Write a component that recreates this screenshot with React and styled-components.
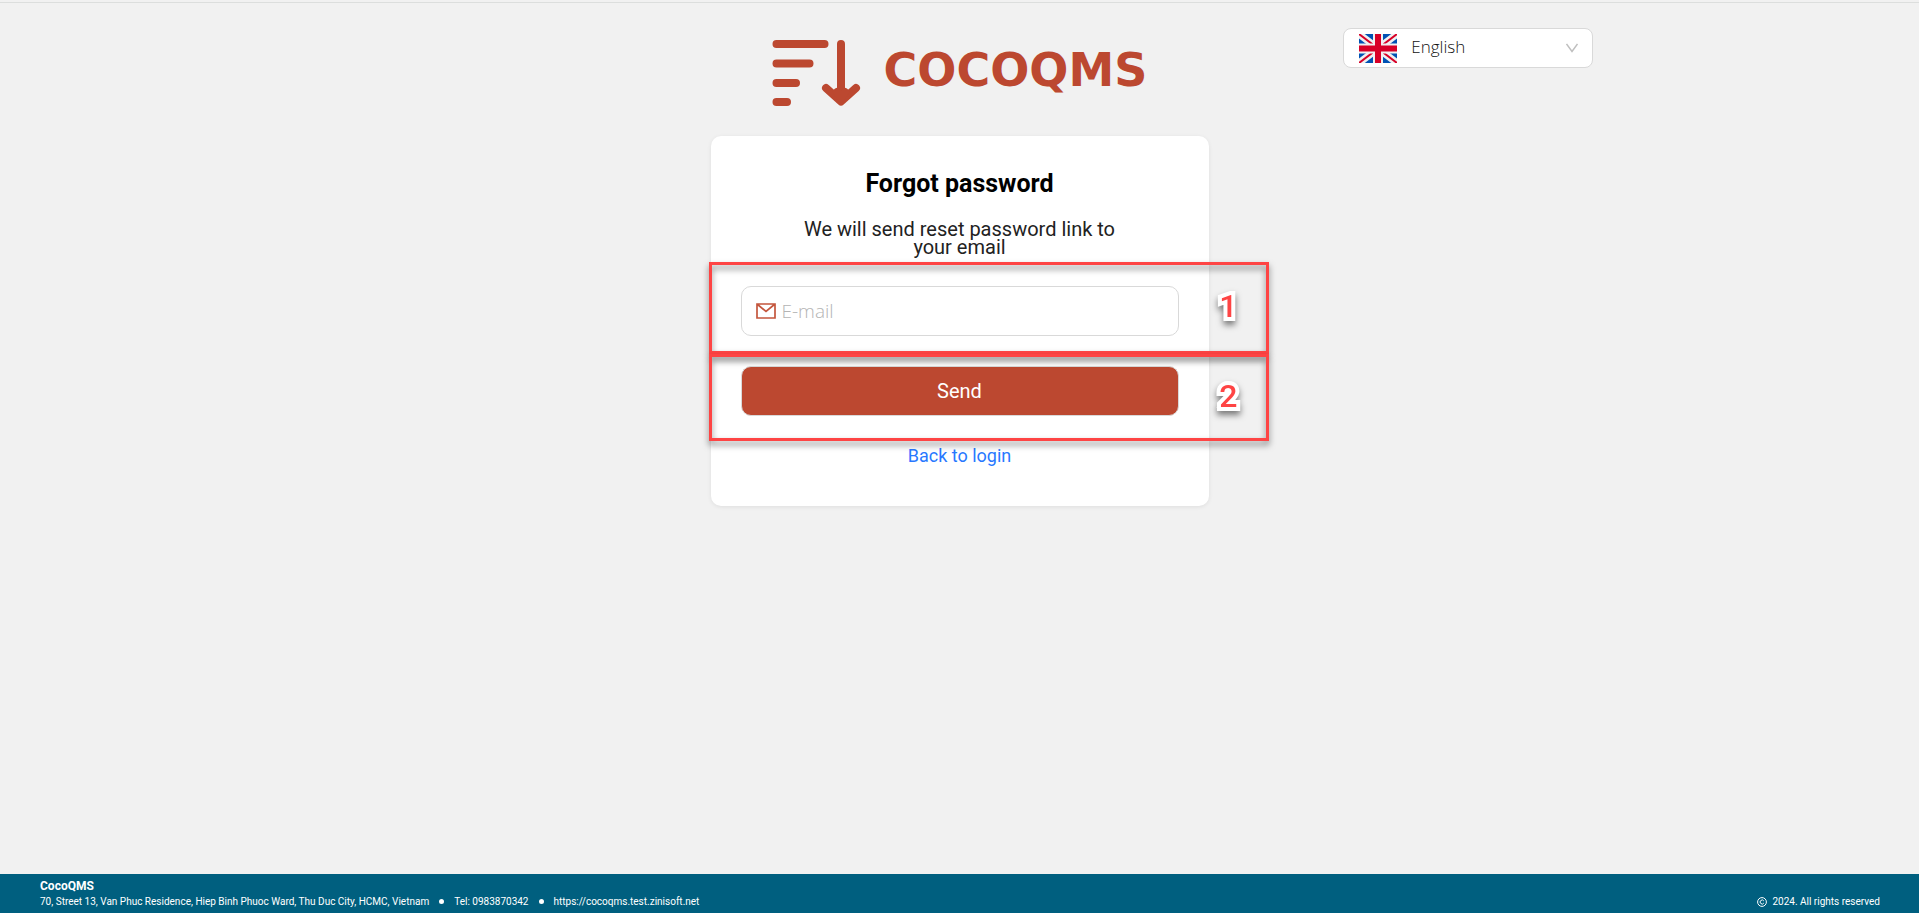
import React from 'react'
import styled, { createGlobalStyle } from 'styled-components'

function App() {
    return (
        <Page>
            <GlobalStyle />
            <Header>
                <Logo>
                    <LogoMark viewBox="0 0 90 66" aria-hidden="true">
                        <path d="M4.5 4H52.5M4.5 23.5H37.5M4.5 43H24M4.5 62H15" />
                        <path d="M69 4V60M54 48L69 61.500L84 48" />
                        <path d="M65 52L69 58L73 52" />
                    </LogoMark>
                    <LogoText>COCOQMS</LogoText>
                </Logo>
                <Language>
                    <Flag />
                    <LanguageSelect aria-label="Language" defaultValue="en">
                        <option value="en">English</option>
                    </LanguageSelect>
                    <Chevron viewBox="0 0 12 10" aria-hidden="true">
                        <path d="M0.500 1L6 8.500L11.500 1" />
                    </Chevron>
                </Language>
            </Header>

            <Card onSubmit={(e) => e.preventDefault()}>
                <Title>Forgot password</Title>
                <Description>We will send reset password link to your email</Description>
                <Step>
                    <Field>
                        <MailIcon viewBox="0 0 20 16" aria-hidden="true">
                            <path d="M1 1H19V15H1ZM1 1L10 8.500L19 1" />
                        </MailIcon>
                        <Input type="email" placeholder="E-mail" aria-label="E-mail" />
                    </Field>
                    <Frame $top={24} $bottom={18}>
                        <Marker>1</Marker>
                    </Frame>
                </Step>
                <Step>
                    <SendButton type="submit">Send</SendButton>
                    <Frame $top={12} $bottom={25}>
                        <Marker>2</Marker>
                    </Frame>
                </Step>
                <BackLink href="#login">Back to login</BackLink>
            </Card>

            <Footer>
                <div>
                    <Company>CocoQMS</Company>
                    <Contacts>
                        <span>70, Street 13, Van Phuc Residence, Hiep Binh Phuoc Ward, Thu Duc City, HCMC, Vietnam</span>
                        <Dot />
                        <span>Tel: 0983870342</span>
                        <Dot />
                        <SiteLink href="https://cocoqms.test.zinisoft.net">https://cocoqms.test.zinisoft.net</SiteLink>
                    </Contacts>
                </div>
                <Copyright>
                    <CopyIcon viewBox="0 0 10 10" aria-hidden="true">
                        <circle cx="5" cy="5" r="4.400" />
                        <path d="M6.800 3.900A2 2 0 1 0 6.800 6.100" />
                    </CopyIcon>
                    2024. All rights reserved
                </Copyright>
            </Footer>
        </Page>
    )
}

function Flag() {
    return (
        <FlagSvg viewBox="0 0 38 29" aria-hidden="true">
            <rect width="38" height="29" fill="#0052b4" />
            <path d="M0 0L38 29M38 0L0 29" stroke="#f0f0f0" strokeWidth="7" />
            <path d="M0 0L38 29M38 0L0 29" stroke="#d80027" strokeWidth="2" />
            <path d="M19 0V29M0 14.500H38" stroke="#f0f0f0" strokeWidth="10" />
            <path d="M19 0V29M0 14.500H38" stroke="#d80027" strokeWidth="6" />
        </FlagSvg>
    )
}

export default App

const GlobalStyle = createGlobalStyle`
    * {
        box-sizing:border-box;
    }
    body {
        margin:0;
        background:#f1f1f1;
        font-family:Roboto, "Liberation Sans", sans-serif;
    }
`
const Page = styled.div`
    min-height:100vh;
    display:flex;
    flex-direction:column;
    align-items:center;
    &::before {
        content:"";
        width:100%;
        height:2px;
        border-bottom:1px solid #dcdedd;
    }
`
const Header = styled.header`
    width:100%;
    display:grid;
    grid-template-columns:3fr 4fr 3fr;
    align-items:start;
    padding-top:25px;
    margin-bottom:30px;
`
const Logo = styled.div`
    grid-column:2;
    display:flex;
    justify-content:center;
    align-items:flex-start;
    gap:22px;
    padding-top:12px;
`
const LogoMark = styled.svg`
    width:90px;
    height:66px;
    fill:none;
    stroke:#bc4830;
    stroke-width:8;
    stroke-linecap:round;
    stroke-linejoin:round;
`
const LogoText = styled.span`
    color:#bc4830;
    font-family:"DejaVu Sans", sans-serif;
    font-size:46px;
    font-weight:700;
    line-height:60px;
`
const Language = styled.div`
    display:flex;
    align-items:center;
    position:relative;
    width:250px;
    height:40px;
    background:#fff;
    border:1px solid #d9d9d9;
    border-radius:8px;
`
const FlagSvg = styled.svg`
    position:absolute;
    left:15px;
    width:38px;
    height:29px;
    pointer-events:none;
`
const LanguageSelect = styled.select`
    appearance:none;
    width:100%;
    height:100%;
    padding:0 40px 4px 67px;
    border:0;
    border-radius:8px;
    background:transparent;
    color:#111;
    font-family:"Open Sans", sans-serif;
    font-size:17px;
    font-weight:300;
`
const Chevron = styled.svg`
    position:absolute;
    right:14px;
    width:12px;
    height:10px;
    fill:none;
    stroke:#bfbfbf;
    stroke-width:1.5;
    pointer-events:none;
`
const Card = styled.form`
    width:498px;
    max-width:100%;
    padding:32px 30px 38px;
    display:flex;
    flex-direction:column;
    background:#fff;
    border-radius:10px;
    box-shadow:0 1px 4px rgba(0,0,0,0.08);
`
const Title = styled.h1`
    margin:0 0 20px;
    color:#000;
    font-size:25px;
    font-weight:700;
    line-height:32px;
    text-align:center;
`
const Description = styled.p`
    margin:0 50px 30px;
    color:#222;
    font-size:20px;
    line-height:18px;
    text-align:center;
`
const Step = styled.div`
    position:relative;
    & + & {
        margin-top:30px;
    }
`
const Field = styled.label`
    display:flex;
    align-items:center;
    gap:6px;
    height:50px;
    padding:0 14px;
    border:1px solid #d9d9d9;
    border-radius:10px;
`
const MailIcon = styled.svg`
    flex:none;
    width:20px;
    height:16px;
    fill:none;
    stroke:#c4563d;
    stroke-width:1.7;
`
const Input = styled.input`
    flex:1;
    min-width:0;
    padding:0;
    border:0;
    outline:0;
    background:transparent;
    font-family:"Open Sans", sans-serif;
    font-size:19px;
    font-weight:300;
    &::placeholder {
        color:#b4b4b4;
    }
`
const SendButton = styled.button`
    display:block;
    width:100%;
    height:50px;
    border:1px solid #d9d9d9;
    border-radius:10px;
    background:#bc4830;
    color:#fff;
    font-family:inherit;
    font-size:20px;
    cursor:pointer;
`
const Frame = styled.div`
    position:absolute;
    top:${(props) => -props.$top}px;
    bottom:${(props) => -props.$bottom}px;
    left:-32px;
    right:-90px;
    display:flex;
    justify-content:flex-end;
    align-items:center;
    padding:0 28px 4px 0;
    border:3px solid #fe4444;
    filter:drop-shadow(0 4px 3px rgba(0,0,0,0.5));
    pointer-events:none;
`
const Marker = styled.span`
    color:#fe4444;
    font-size:32px;
    font-weight:500;
    line-height:40px;
    -webkit-text-stroke:8px #fff;
    paint-order:stroke fill;
`
const BackLink = styled.a`
    align-self:center;
    margin-top:28px;
    color:#2878ff;
    font-size:18px;
    line-height:24px;
    text-decoration:none;
`
const Footer = styled.footer`
    width:100%;
    margin-top:auto;
    display:flex;
    justify-content:space-between;
    align-items:flex-end;
    padding:5px 39px 4px 40px;
    background:#005f7f;
    color:#fff;
    font-size:10px;
    line-height:15px;
`
const Company = styled.div`
    font-size:12px;
    font-weight:700;
`
const Contacts = styled.div`
    display:flex;
    align-items:center;
    gap:10px;
`
const Dot = styled.i`
    width:5px;
    height:5px;
    border-radius:50%;
    background:#fff;
`
const SiteLink = styled.a`
    color:inherit;
    text-decoration:none;
`
const Copyright = styled.div`
    display:flex;
    align-items:center;
    gap:5px;
`
const CopyIcon = styled.svg`
    width:10px;
    height:10px;
    fill:none;
    stroke:#fff;
`
